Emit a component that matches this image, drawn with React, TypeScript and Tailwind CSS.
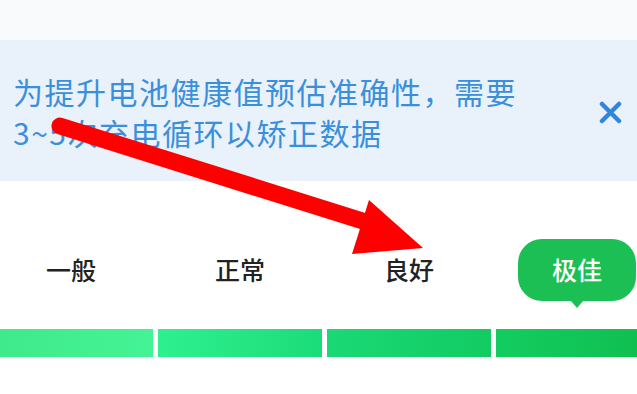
import React from "react";

const levels = [
  { label: "一般", bar: "bg-gradient-to-r from-[#3fe98b] to-[#44f395]" },
  { label: "正常", bar: "bg-gradient-to-r from-[#2ff08f] to-[#1adc78]" },
  { label: "良好", bar: "bg-gradient-to-r from-[#1ad976] to-[#12cb62]" },
  { label: "极佳", bar: "bg-gradient-to-r from-[#13cc60] to-[#0fbe4e]", active: true },
];

function CloseIcon() {
  return (
    <svg width="23" height="23" viewBox="0 0 23 23" className="shrink-0">
      <path d="M3 3 L20 20 M20 3 L3 20" stroke="#2f86dc" strokeWidth="4.5" strokeLinecap="round" />
    </svg>
  );
}

function Arrow() {
  // red annotation arrow drawn over the screenshot
  return (
    <svg
      className="pointer-events-none absolute inset-0"
      width="637"
      height="394"
      viewBox="0 0 637 394"
    >
      <line x1="60" y1="126" x2="385" y2="228" stroke="#ff0000" strokeWidth="17" strokeLinecap="round" />
      <polygon points="369,200 423,248 352,254" fill="#ff0000" />
    </svg>
  );
}

export default function App() {
  return (
    <div
      className="relative h-[394px] w-[637px] overflow-hidden bg-white"
      style={{ fontFamily: '"Noto Sans CJK SC", "Noto Sans", sans-serif' }}
    >
      <div className="h-[40px] bg-[#f8fafc]" />

      <div className="flex items-center bg-[#e9f1fa] pb-[28px] pl-[13px] pr-[15px] pt-[31px]">
        <p className="flex-1 text-[30px] leading-[41px] tracking-[1.5px] text-[#3a8fdc]">
          为提升电池健康值预估准确性，需要
          <br />
          3~5次充电循环以矫正数据
        </p>
        <CloseIcon />
      </div>

      <div className="-ml-[11px] w-[671px]">
        <div className="mt-[58px] grid h-[62px] grid-cols-4 gap-[5px]">
          {levels.map((l) => (
            <div key={l.label} className="flex items-center justify-center">
              {l.active ? (
                <div className="relative ml-[-2px] flex h-[62px] w-[118px] items-center justify-center rounded-[24px] bg-[#1bbf54] text-[25px] font-medium text-white">
                  {l.label}
                  <span className="absolute -bottom-[7px] left-1/2 h-0 w-0 -translate-x-1/2 border-x-[7px] border-t-[8px] border-x-transparent border-t-[#1bbf54]" />
                </div>
              ) : (
                <span className="text-[25px] font-medium text-[#222]">{l.label}</span>
              )}
            </div>
          ))}
        </div>

        <div className="mt-[28px] grid h-[28px] grid-cols-4 gap-[5px]">
          {levels.map((l) => (
            <div key={l.label} className={l.bar} />
          ))}
        </div>
      </div>

      <Arrow />
    </div>
  );
}
